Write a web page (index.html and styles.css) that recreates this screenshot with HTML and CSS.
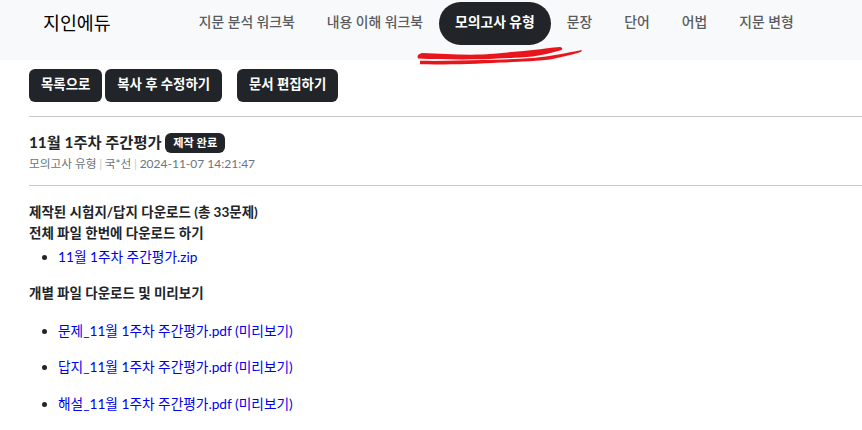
FILE: index.html
```html
<!DOCTYPE html>
<html lang="ko">
<head>
<meta charset="utf-8">
<title>지인에듀</title>
<link rel="stylesheet" href="styles.css">
</head>
<body>
<header class="topbar">
  <a class="brand">지인에듀</a>
  <nav class="nav">
    <a class="nav-link">지문 분석 워크북</a>
    <a class="nav-link">내용 이해 워크북</a>
    <a class="nav-link active">모의고사 유형</a>
    <a class="nav-link">문장</a>
    <a class="nav-link">단어</a>
    <a class="nav-link">어법</a>
    <a class="nav-link">지문 변형</a>
  </nav>
  <svg class="scribble" width="170" height="24" viewBox="0 0 170 24">
    <path d="M6 9 C25 10 45 11 67 10.5 C85 9 102 7.5 117 6 C127 5 136 3.5 144 3 C147 3.500 147 6 144 6.500 C135 9 126 11 117 12.500 C100 14 85 14.500 67 15.300 C45 15.500 22 15.500 2 14.500 C1 12 2 10 6 9 Z" fill="#e8161c"/>
    <path d="M4 16.800 C25 17.300 45 16.500 67 16 C85 15.500 102 15 117 14 C135 12.500 150 9 165.700 6 C166 7 165 8 164 8.300 C155 11 145 13.500 134 15.500 C118 17.500 100 18 84 18.500 C60 20 30 20.700 4 20.300 Z" fill="#e8161c"/>
  </svg>
</header>
<main class="content">
  <div class="actions">
    <a class="btn">목록으로</a>
    <a class="btn">복사 후 수정하기</a>
    <a class="btn btn-gap">문서 편집하기</a>
  </div>
  <hr class="rule">
  <div class="heading">
    <h1 class="title">11월 1주차 주간평가 <span class="badge">제작 완료</span></h1>
    <p class="meta">모의고사 유형<span class="sep">|</span>국*선<span class="sep">|</span><span class="date">2024-11-07 14:21:47</span></p>
  </div>
  <hr class="rule rule-tight">
  <section class="downloads">
    <h2 class="sub-first">제작된 시험지/답지 다운로드 (총 33문제)</h2>
    <h2 class="sub">전체 파일 한번에 다운로드 하기</h2>
    <ul class="list">
      <li><a class="link">11월 1주차 주간평가.zip</a></li>
    </ul>
    <h2 class="sub sub-mid">개별 파일 다운로드 및 미리보기</h2>
    <ul class="list list-wide">
      <li><a class="link">문제_11월 1주차 주간평가.pdf (미리보기)</a></li>
      <li><a class="link">답지_11월 1주차 주간평가.pdf (미리보기)</a></li>
      <li><a class="link">해설_11월 1주차 주간평가.pdf (미리보기)</a></li>
    </ul>
  </section>
</main>
</body>
</html>
```
FILE: styles.css
```css
* { box-sizing: border-box; }
html, body { margin: 0; padding: 0; }
body {
  width: 862px;
  height: 430px;
  overflow: hidden;
  background: #fff;
  color: #212529;
  font-family: Lato, "Noto Sans CJK KR", sans-serif;
  font-size: 14px;
  line-height: 21px;
}
.topbar {
  position: relative;
  display: flex;
  align-items: flex-start;
  height: 60px;
  background: #f8f9fa;
  padding: 2px 0 0 43px;
}
.brand {
  font-family: "Noto Sans CJK KR", sans-serif;
  font-size: 18.4px;
  line-height: 40px;
  color: #000;
  margin-right: 72px;
}
.nav { display: flex; }
.nav-link {
  height: 43px;
  padding: 0 16px;
  line-height: 40px;
  font-size: 13.85px;
  font-weight: 500;
  color: #595c5f;
  border-radius: 22px;
}
.nav-link.active {
  background: #212529;
  color: #fff;
  font-weight: 700;
}
.scribble { position: absolute; left: 416px; top: 44px; }
.content { padding: 0 0 0 29px; }
.actions { display: flex; padding-top: 9px; }
.btn {
  height: 33px;
  padding: 0 12px;
  line-height: 31px;
  background: #212529;
  color: #fff;
  font-weight: 700;
  font-size: 13.4px;
  border-radius: 6px;
  margin-right: 3px;
}
.btn-gap { margin-left: 12px; }
.rule { border: 0; border-top: 1px solid #c8c9ca; margin: 14px 0 0; }
.rule-tight { margin-top: 0; }
.heading { padding-top: 14px; height: 68px; }
.title { margin: 0; font-size: 15.3px; line-height: 22px; font-weight: 700; }
.badge {
  display: inline-block;
  background: #212529;
  color: #fff;
  font-size: 11.2px;
  line-height: 20px;
  height: 20px;
  padding: 0 8px;
  border-radius: 6px;
  vertical-align: 1px;
}
.meta { margin: 1px 0 0; font-size: 11.7px; line-height: 18px; color: #6c757d; }
.date { font-size: 12px; }
.sep { color: #c8c9ca; margin: 0 2.700px; }
.downloads { padding-top: 16px; }
.sub-first, .sub { margin: 0; font-size: 13.5px; line-height: 21px; font-weight: 700; }
.sub { margin-top: 0; }
.sub-mid { margin-top: 16px; }
.list { margin: 2px 0 0; padding-left: 29px; font-size: 13.7px; }
.list-wide { margin-top: 15.700px; }
.list-wide li { margin-bottom: 15.500px; }
.link { color: #0000ee; }
```
